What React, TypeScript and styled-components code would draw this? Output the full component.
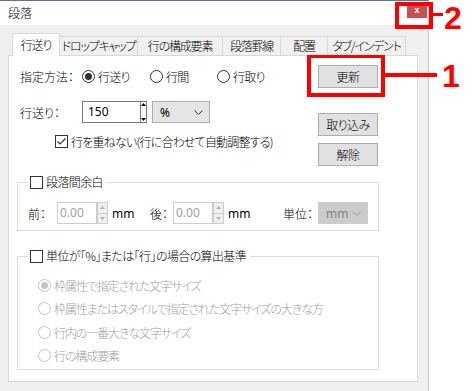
import React from "react";
import styled, { createGlobalStyle } from "styled-components";

const GlobalStyle = createGlobalStyle`
  html, body {
    margin: 0;
    padding: 0;
    background: #fff;
  }
  body {
    font-family: "Noto Sans CJK JP", "Noto Sans", sans-serif;
    font-size: 12px;
    font-weight: 300;
    color: #000;
    font-feature-settings: "palt" 1;
  }
  * {
    box-sizing: border-box;
  }
`;

const Screen = styled.div`
  position: relative;
  width: 472px;
  height: 391px;
  overflow: hidden;
  background: #fff;
`;

const Window = styled.div`
  width: 429px;
  height: 391px;
  background: #f0f0f0;
  border-top: 1px solid #5b7592;
  border-right: 1px solid #c9c9c9;
`;

const TitleBar = styled.div`
  height: 24px;
  background: #fff;
  display: flex;
  align-items: flex-start;
  padding-left: 8px;
`;

const TitleText = styled.span`
  line-height: 24px;
`;

const CloseButton = styled.div`
  margin: 1px 1px 0 auto;
  width: 20px;
  height: 16px;
  background: #c75050;
  color: #fff;
  font: bold 9px "Liberation Sans", sans-serif;
  display: flex;
  align-items: center;
  justify-content: center;
`;

const Client = styled.div`
  padding: 8px 10px 0 8px;
`;

const TabStrip = styled.div`
  display: flex;
  align-items: flex-end;
  height: 22px;
  padding-left: 4px;
  position: relative;
  z-index: 1;
`;

const Tab = styled.div<{ $w: number; $active?: boolean }>`
  width: ${(p) => p.$w}px;
  height: ${(p) => (p.$active ? 23 : 19)}px;
  margin-bottom: ${(p) => (p.$active ? -1 : 0)}px;
  background: ${(p) => (p.$active ? "#fff" : "#f0f0f0")};
  border: 1px solid #d9d9d9;
  border-bottom: none;
  display: flex;
  justify-content: center;
  line-height: 18px;
  letter-spacing: -1.2px;
  padding-top: ${(p) => (p.$active ? 2 : 0)}px;
  white-space: nowrap;
  position: relative;
  z-index: ${(p) => (p.$active ? 2 : 1)};
  & + & {
    margin-left: -1px;
  }
`;

const Panel = styled.div`
  height: 327px;
  background: #fff;
  border: 1px solid #d9d9d9;
  padding: 9px 38px 0 8px;
`;

const TopSection = styled.div`
  display: flex;
  justify-content: space-between;
`;

const FormColumn = styled.div`
  display: flex;
  flex-direction: column;
  padding-left: 3px;
`;

const FormRow = styled.div<{ $h: number; $mt?: number; $indent?: number }>`
  display: flex;
  align-items: center;
  height: ${(p) => p.$h}px;
  margin-top: ${(p) => p.$mt ?? 0}px;
  padding-left: ${(p) => p.$indent ?? 0}px;
  white-space: nowrap;
`;

const FieldLabel = styled.span<{ $w: number }>`
  width: ${(p) => p.$w}px;
  flex: none;
`;

const OptionItem = styled.label<{ $w?: number; $disabled?: boolean }>`
  display: flex;
  align-items: center;
  width: ${(p) => (p.$w ? `${p.$w}px` : "auto")};
  height: 16px;
  color: ${(p) => (p.$disabled ? "#a0a0a0" : "#000")};
  letter-spacing: ${(p) => (p.$disabled ? -1.1 : -0.8)}px;
  white-space: nowrap;
`;

const RadioCircle = styled.span<{ $checked?: boolean; $disabled?: boolean }>`
  width: 13px;
  height: 13px;
  flex: none;
  border-radius: 50%;
  border: 1px solid ${(p) => (p.$disabled ? "#c4c4c4" : "#333")};
  background: #fff;
  margin-right: 3px;
  display: flex;
  align-items: center;
  justify-content: center;
  &::after {
    content: "";
    display: ${(p) => (p.$checked ? "block" : "none")};
    width: 7px;
    height: 7px;
    border-radius: 50%;
    background: ${(p) => (p.$disabled ? "#c4c4c4" : "#333")};
  }
`;

const CheckBox = styled.span`
  width: 13px;
  height: 13px;
  flex: none;
  border: 1px solid #333;
  background: #fff;
  margin-right: 3px;
  display: flex;
  align-items: center;
  justify-content: center;
`;

const InputField = styled.div<{ $w: number; $disabled?: boolean }>`
  width: ${(p) => p.$w}px;
  height: 22px;
  border: 1px solid ${(p) => (p.$disabled ? "#cccccc" : "#7a7a7a")};
  border-right: ${(p) => (p.$disabled ? "1px solid #cccccc" : "none")};
  background: #fff;
  color: ${(p) => (p.$disabled ? "#a0a0a0" : "#000")};
  padding-left: ${(p) => (p.$disabled ? 2 : 5)}px;
  line-height: 20px;
  font-family: "Noto Sans", "Noto Sans CJK JP", sans-serif;
  font-weight: 400;
  flex: none;
`;

const NarrowSpinner = styled.div`
  width: 7px;
  height: 22px;
  border: 1px solid #7a7a7a;
  background: #fff;
  display: flex;
  flex-direction: column;
  justify-content: space-between;
  align-items: center;
  padding: 1px 0;
  flex: none;
`;

const SpinStack = styled.div`
  width: 11px;
  height: 22px;
  display: flex;
  flex-direction: column;
  flex: none;
`;

const SpinHalf = styled.div`
  flex: 1;
  border: 1px solid #cccccc;
  background: #f0f0f0;
  display: flex;
  align-items: center;
  justify-content: center;
  & + & {
    border-top: none;
  }
`;

const Select = styled.div<{ $w: number; $disabled?: boolean; $ml?: number }>`
  width: ${(p) => p.$w}px;
  height: 22px;
  margin-left: ${(p) => p.$ml ?? 0}px;
  background: ${(p) => (p.$disabled ? "#cccccc" : "#e5e5e5")};
  border: 1px solid ${(p) => (p.$disabled ? "#cccccc" : "#acacac")};
  color: ${(p) => (p.$disabled ? "#838383" : "#000")};
  display: flex;
  align-items: center;
  justify-content: space-between;
  padding: 0 6px 0 7px;
  font-family: "Noto Sans", "Noto Sans CJK JP", sans-serif;
  font-weight: 400;
  flex: none;
`;

const UnitText = styled.span<{ $w: number }>`
  width: ${(p) => p.$w}px;
  margin-left: 4px;
  font-family: "Noto Sans", "Noto Sans CJK JP", sans-serif;
  font-weight: 400;
  flex: none;
`;

const ButtonColumn = styled.div`
  display: flex;
  flex-direction: column;
  width: 60px;
  margin-right: 1px;
`;

const PushButton = styled.div<{ $mt?: number }>`
  height: 23px;
  margin-top: ${(p) => p.$mt ?? 0}px;
  background: #e1e1e1;
  border: 1px solid #adadad;
  display: flex;
  align-items: center;
  justify-content: center;
  letter-spacing: -0.5px;
`;

const GroupBox = styled.fieldset<{ $mt: number; $pt: number; $pb: number }>`
  margin: ${(p) => p.$mt}px 0 0 0;
  padding: ${(p) => p.$pt}px 10px ${(p) => p.$pb}px 10px;
  border: 1px solid #dcdcdc;
  min-width: 0;
`;

const GroupLegend = styled.legend`
  display: flex;
  align-items: center;
  height: 16px;
  line-height: 16px;
  padding: 0 4px 0 2px;
  letter-spacing: -0.6px;
  white-space: nowrap;
`;

const GroupRow = styled.div`
  display: flex;
  align-items: center;
  height: 22px;
  white-space: nowrap;
`;

const PushRight = styled.div`
  margin-left: auto;
  display: flex;
  align-items: center;
`;

const OptionList = styled.div`
  display: flex;
  flex-direction: column;
  gap: 7.5px;
  padding-left: 10px;
`;

const AnnoBox = styled.div`
  position: absolute;
  border: 4px solid #ff0000;
`;

const AnnoLine = styled.div`
  position: absolute;
  background: #ff0000;
`;

const AnnoNumber = styled.div`
  position: absolute;
  color: #ff0000;
  font: bold 32px/36px "Liberation Sans", sans-serif;
`;

const Chevron = ({ color }: { color: string }) => (
  <svg width="9" height="5" viewBox="0 0 9 5">
    <polyline points="0.5,0.5 4.5,4.5 8.5,0.5" fill="none" stroke={color} strokeWidth="1" />
  </svg>
);

const CheckMark = () => (
  <svg width="11" height="11" viewBox="0 0 11 11">
    <polyline points="1.5,5.5 4,8 9.5,2.5" fill="none" stroke="#333" strokeWidth="1.2" />
  </svg>
);

const SmallArrow = ({ up, color }: { up?: boolean; color: string }) => (
  <svg width="5" height="3" viewBox="0 0 5 3">
    <polygon points={up ? "2.5,0 5,3 0,3" : "0,0 5,0 2.5,3"} fill={color} />
  </svg>
);

const DisabledSpin = () => (
  <>
    <InputField $w={40} $disabled>
      0.00
    </InputField>
    <SpinStack>
      <SpinHalf>
        <SmallArrow up color="#b0b0b0" />
      </SpinHalf>
      <SpinHalf>
        <SmallArrow color="#b0b0b0" />
      </SpinHalf>
    </SpinStack>
  </>
);

const tabs = [
  { label: "行送り", w: 48 },
  { label: "ドロップキャップ", w: 79 },
  { label: "行の構成要素", w: 86 },
  { label: "段落罫線", w: 59 },
  { label: "配置", w: 48 },
  { label: "タブ/インデント", w: 79 },
];

const basisOptions = [
  "枠属性で指定された文字サイズ",
  "枠属性またはスタイルで指定された文字サイズの大きな方",
  "行内の一番大きな文字サイズ",
  "行の構成要素",
];

export default function App() {
  return (
    <Screen>
      <GlobalStyle />
      <Window>
        <TitleBar>
          <TitleText>段落</TitleText>
          <CloseButton>x</CloseButton>
        </TitleBar>
        <Client>
          <TabStrip>
            {tabs.map((t, i) => (
              <Tab key={t.label} $w={t.w} $active={i === 0}>
                {t.label}
              </Tab>
            ))}
          </TabStrip>
          <Panel>
            <TopSection>
              <FormColumn>
                <FormRow $h={23}>
                  <FieldLabel $w={62}>指定方法：</FieldLabel>
                  <OptionItem $w={68}>
                    <RadioCircle $checked />
                    行送り
                  </OptionItem>
                  <OptionItem $w={67}>
                    <RadioCircle />
                    行間
                  </OptionItem>
                  <OptionItem>
                    <RadioCircle />
                    行取り
                  </OptionItem>
                </FormRow>
                <FormRow $h={22} $mt={13}>
                  <FieldLabel $w={62}>行送り：</FieldLabel>
                  <InputField $w={58}>150</InputField>
                  <NarrowSpinner>
                    <SmallArrow up color="#000" />
                    <SmallArrow color="#000" />
                  </NarrowSpinner>
                  <Select $w={58} $ml={5}>
                    %
                    <Chevron color="#333" />
                  </Select>
                </FormRow>
                <FormRow $h={18} $mt={9} $indent={35}>
                  <OptionItem>
                    <CheckBox>
                      <CheckMark />
                    </CheckBox>
                    行を重ねない(行に合わせて自動調整する)
                  </OptionItem>
                </FormRow>
              </FormColumn>
              <ButtonColumn>
                <PushButton>更新</PushButton>
                <PushButton $mt={25}>取り込み</PushButton>
                <PushButton $mt={7}>解除</PushButton>
              </ButtonColumn>
            </TopSection>

            <GroupBox $mt={8} $pt={12} $pb={6}>
              <GroupLegend>
                <CheckBox />
                段落間余白
              </GroupLegend>
              <GroupRow>
                <FieldLabel $w={29}>前：</FieldLabel>
                <DisabledSpin />
                <UnitText $w={38}>mm</UnitText>
                <FieldLabel $w={23}>後：</FieldLabel>
                <DisabledSpin />
                <UnitText $w={30}>mm</UnitText>
                <PushRight>
                  <FieldLabel $w={35}>単位：</FieldLabel>
                  <Select $w={50} $disabled>
                    mm
                    <Chevron color="#9a9a9a" />
                  </Select>
                </PushRight>
              </GroupRow>
            </GroupBox>

            <GroupBox $mt={17} $pt={13} $pb={5}>
              <GroupLegend>
                <CheckBox />
                単位が「%」または「行」の場合の算出基準
              </GroupLegend>
              <OptionList>
                {basisOptions.map((o, i) => (
                  <OptionItem key={o} $disabled>
                    <RadioCircle $disabled $checked={i === 0} />
                    {o}
                  </OptionItem>
                ))}
              </OptionList>
            </GroupBox>
          </Panel>
        </Client>
      </Window>

      <AnnoBox style={{ left: 395, top: 2, width: 38, height: 27 }} />
      <AnnoLine style={{ left: 433, top: 13, width: 10, height: 3 }} />
      <AnnoNumber style={{ left: 444, top: 0 }}>2</AnnoNumber>

      <AnnoBox style={{ left: 307, top: 54, width: 78, height: 43 }} />
      <AnnoLine style={{ left: 385, top: 73, width: 52, height: 4 }} />
      <AnnoNumber style={{ left: 442, top: 58 }}>1</AnnoNumber>
    </Screen>
  );
}
